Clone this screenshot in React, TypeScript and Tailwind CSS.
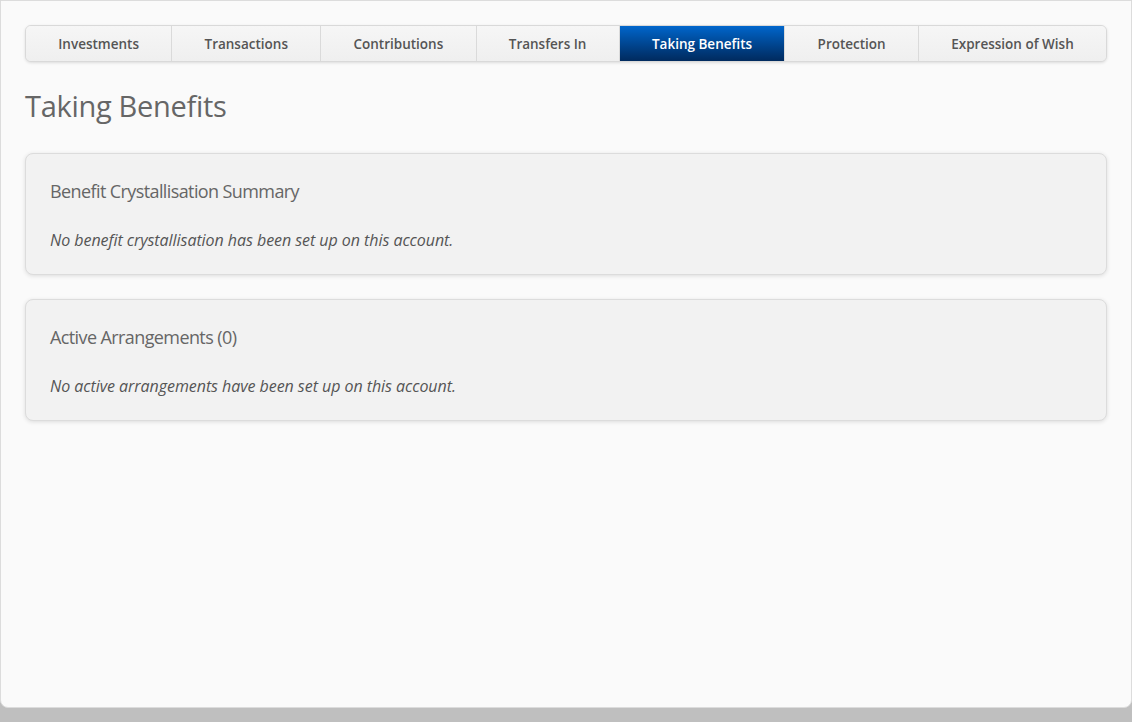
import React from "react";

const tabs = [
  "Investments",
  "Transactions",
  "Contributions",
  "Transfers In",
  "Taking Benefits",
  "Protection",
  "Expression of Wish",
];

const cards = [
  {
    title: "Benefit Crystallisation Summary",
    text: "No benefit crystallisation has been set up on this account.",
  },
  {
    title: "Active Arrangements (0)",
    text: "No active arrangements have been set up on this account.",
  },
];

const App = () => {
  return (
    <div
      className="flex h-[722px] w-[1132px] flex-col bg-[#bfbfbf]"
      style={{ fontFamily: '"Open Sans", "Liberation Sans", sans-serif' }}
    >
      <div className="h-[708px] rounded-b-lg border border-[#dcdcdc] bg-[#fafafa] px-6 pt-6">
        <div className="flex h-[37px] overflow-hidden rounded-md border border-[#d9d9d9] bg-[#f3f3f3] shadow-[0_1px_3px_rgba(0,0,0,0.12)]">
          {tabs.map((tab, index) => {
            const active = tab === "Taking Benefits";
            return (
              <div
                key={tab}
                className={`flex flex-auto items-center justify-center px-2 pt-[2px] text-[13.5px] font-semibold ${
                  index > 0 ? "border-l border-[#dadada]" : ""
                } ${
                  active
                    ? "bg-gradient-to-b from-[#0066cc] to-[#002a5e] text-white"
                    : "bg-gradient-to-b from-[#f6f6f6] to-[#efefef] text-[#555]"
                }`}
              >
                {tab}
              </div>
            );
          })}
        </div>

        <h1 className="mt-[24px] text-[29px] leading-[40px] tracking-[-0.3px] text-[#666]">
          Taking Benefits
        </h1>

        <div className="mt-[27px] flex flex-col gap-[24px]">
          {cards.map((card) => (
            <div
              key={card.title}
              className="h-[122px] rounded-lg border border-[#dcdcdc] bg-[#f2f2f2] px-6 pt-[25px] shadow-[0_1px_4px_rgba(0,0,0,0.12)]"
            >
              <h2 className="text-[18px] leading-[24px] tracking-[-0.6px] text-[#666]">
                {card.title}
              </h2>
              <p className="mt-[25px] text-[16px] leading-[24px] tracking-[-0.05px] italic text-[#555]">
                {card.text}
              </p>
            </div>
          ))}
        </div>
      </div>
    </div>
  );
};

export default App;
